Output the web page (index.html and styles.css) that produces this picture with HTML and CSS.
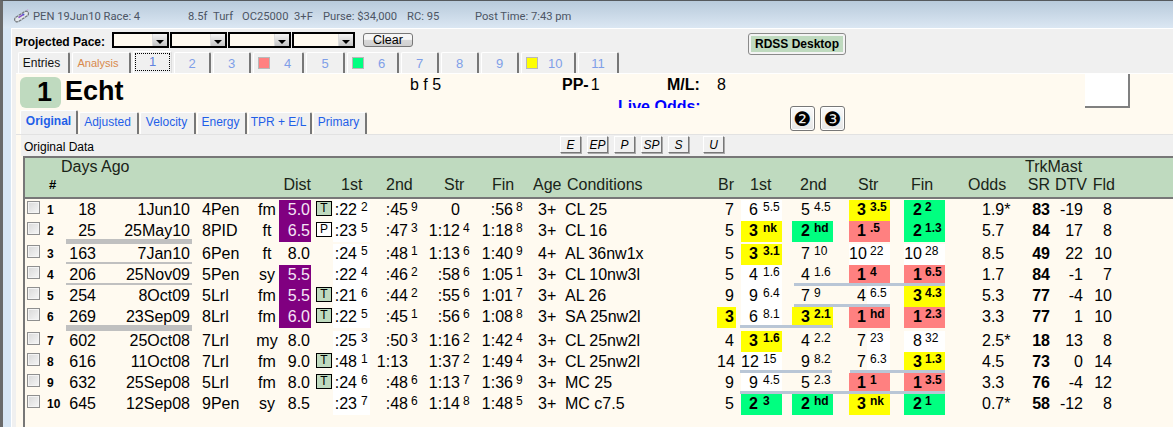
FILE: index.html
```html
<!DOCTYPE html>
<html lang="en">
<head>
<meta charset="utf-8">
<title>Echt</title>
<link rel="stylesheet" href="styles.css">
</head>
<body>
<div class="window">
  <div class="titlebar">
    <svg class="clip" width="15" height="14" viewBox="0 0 15 14"><rect x="-.5" y="5" width="15.5" height="5" rx="2.5" transform="rotate(-33 7.5 7)" fill="#e4e8ec" stroke="#70757a" stroke-width="1.2" stroke-dasharray="3 .6"/><path d="M4.5 8.7 9.5 5.4" stroke="#8a50c8" stroke-width="1.6"/><circle cx="9.5" cy="5.4" r="1" fill="#4858d0"/><circle cx="13.6" cy="1" r=".8" fill="#c8a0d8"/></svg>
    <span class="ti">PEN 19Jun10 Race: 4</span>
    <span class="ti">8.5f</span>
    <span class="ti">Turf</span>
    <span class="ti">OC25000</span>
    <span class="ti">3+F</span>
    <span class="ti">Purse: $34,000</span>
    <span class="ti">RC: 95</span>
    <span class="ti">Post Time: 7:43 pm</span>
  </div>
  <div class="client">
    <div class="pace">
      <span class="pace-label">Projected Pace:</span>
      <div class="combo combo-a"><span class="drop"></span></div>
      <div class="combo combo-a"><span class="drop"></span></div>
      <div class="combo combo-b"><span class="drop"></span></div>
      <div class="combo combo-b"><span class="drop"></span></div>
      <button class="clear">Clear</button>
      <button class="rdss"><span>RDSS Desktop</span></button>
    </div>
    <div class="tabs">
      <div class="tab tab-entries">Entries</div>
      <div class="tab tab-analysis">Analysis</div>
      <div class="tab tab-sel"><span class="focus">1</span></div>
      <div class="tab">2</div>
      <div class="tab">3</div>
      <div class="tab tab-sw"><i class="sw sw-red"></i>4</div>
      <div class="tab">5</div>
      <div class="tab tab-sw"><i class="sw sw-green"></i>6</div>
      <div class="tab">7</div>
      <div class="tab">8</div>
      <div class="tab">9</div>
      <div class="tab tab-sw tab-sw10"><i class="sw sw-yellow"></i>10</div>
      <div class="tab">11</div>
    </div>
    <div class="page">
      <div class="card">
        <div class="badge">1</div>
        <div class="name">Echt</div>
        <div class="info info-sex">b f 5</div>
        <div class="info info-pp"><b>PP-</b>1</div>
        <div class="live">Live Odds:</div>
        <div class="info info-ml"><b>M/L:</b><span class="ml-val">8</span></div>
        <div class="photo"></div>
        <div class="subtabs">
          <div class="subtab subtab-sel">Original</div>
          <div class="subtab">Adjusted</div>
          <div class="subtab">Velocity</div>
          <div class="subtab">Energy</div>
          <div class="subtab">TPR + E/L</div>
          <div class="subtab">Primary</div>
        </div>
        <div class="circles">
          <button class="circle">❷</button>
          <button class="circle">❸</button>
        </div>
      </div>
      <div class="sub">
        <div class="subhead">
          <span class="subhead-label">Original Data</span>
          <button class="pb">E</button>
          <button class="pb">EP</button>
          <button class="pb">P</button>
          <button class="pb">SP</button>
          <button class="pb">S</button>
          <button class="pb pb-u">U</button>
        </div>
        <div class="table">
          <div class="head">
            <div class="h h-days">Days Ago</div>
            <div class="h h-trk">TrkMast</div>
            <div class="h h-hash">#</div>
            <div class="h h-dist">Dist</div>
            <div class="h h-t1">1st</div>
            <div class="h h-t2">2nd</div>
            <div class="h h-t3">Str</div>
            <div class="h h-t4">Fin</div>
            <div class="h h-age">Age</div>
            <div class="h h-cond">Conditions</div>
            <div class="h h-br">Br</div>
            <div class="h h-p1">1st</div>
            <div class="h h-p2">2nd</div>
            <div class="h h-p3">Str</div>
            <div class="h h-p4">Fin</div>
            <div class="h h-odds">Odds</div>
            <div class="h h-sr">SR</div>
            <div class="h h-dtv">DTV</div>
            <div class="h h-fld">Fld</div>
          </div>
          <div class="rows">

            <div class="row">
              <input class="cb" type="checkbox"><b class="num">1</b><span class="days">18</span><span class="date">1Jun10</span><span class="race">4Pen</span><span class="surf">fm</span><span class="dist purple">5.0</span><span class="trk"><i class="tag tag-t">T</i></span>
              <span class="tm t1"><span class="m">:22</span><span class="s">2</span></span><span class="tm t2"><span class="m">:45</span><span class="s">9</span></span><span class="tm t3"><span class="m">0</span></span><span class="tm t4"><span class="m">:56</span><span class="s">8</span></span>
              <span class="age">3+</span><span class="cond">CL 25</span><span class="br">7</span>
              <span class="p p1 w"><span class="m">6</span><span class="s">5.5</span></span><span class="p p2"><span class="m">5</span><span class="s">4.5</span></span><span class="p p3 y"><span class="m">3</span><span class="s">3.5</span></span><span class="p p4 g"><span class="m">2</span><span class="s">2</span></span>
              <span class="odds">1.9*</span><b class="sr">83</b><span class="dtv">-19</span><span class="fld">8</span>
            </div>

            <div class="row sep2">
              <input class="cb" type="checkbox"><b class="num">2</b><span class="days">25</span><span class="date">25May10</span><span class="race">8PID</span><span class="surf">ft</span><span class="dist purple">6.5</span><span class="trk"><i class="tag tag-p">P</i></span>
              <span class="tm t1"><span class="m">:23</span><span class="s">5</span></span><span class="tm t2"><span class="m">:47</span><span class="s">3</span></span><span class="tm t3"><span class="m">1:12</span><span class="s">4</span></span><span class="tm t4"><span class="m">1:18</span><span class="s">8</span></span>
              <span class="age">3+</span><span class="cond">CL 16</span><span class="br">5</span>
              <span class="p p1 y"><span class="m">3</span><span class="s">nk</span></span><span class="p p2 g"><span class="m">2</span><span class="s">hd</span></span><span class="p p3 r"><span class="m">1</span><span class="s">.5</span></span><span class="p p4 g"><span class="m">2</span><span class="s">1.3</span></span>
              <span class="odds">5.7</span><b class="sr">84</b><span class="dtv">17</span><span class="fld">8</span>
              <i class="bar-g bar-thick"></i>
            </div>

            <div class="row">
              <input class="cb" type="checkbox"><b class="num">3</b><span class="days">163</span><span class="date">7Jan10</span><span class="race">6Pen</span><span class="surf">ft</span><span class="dist">8.0</span>
              <span class="tm t1"><span class="m">:24</span><span class="s">5</span></span><span class="tm t2"><span class="m">:48</span><span class="s">1</span></span><span class="tm t3"><span class="m">1:13</span><span class="s">6</span></span><span class="tm t4"><span class="m">1:40</span><span class="s">9</span></span>
              <span class="age">4+</span><span class="cond">AL 36nw1x</span><span class="br">5</span>
              <span class="p p1 y"><span class="m">3</span><span class="s">3.1</span></span><span class="p p2"><span class="m">7</span><span class="s">10</span></span><span class="p p3 w"><span class="m">10</span><span class="s">22</span></span><span class="p p4 w"><span class="m">10</span><span class="s">28</span></span>
              <span class="odds">8.5</span><b class="sr">49</b><span class="dtv">22</span><span class="fld">10</span>
              <i class="bar-g"></i>
            </div>

            <div class="row">
              <input class="cb" type="checkbox"><b class="num">4</b><span class="days">206</span><span class="date">25Nov09</span><span class="race">5Pen</span><span class="surf">sy</span><span class="dist purple">5.5</span>
              <span class="tm t1"><span class="m">:22</span><span class="s">4</span></span><span class="tm t2"><span class="m">:46</span><span class="s">2</span></span><span class="tm t3"><span class="m">:58</span><span class="s">6</span></span><span class="tm t4"><span class="m">1:05</span><span class="s">1</span></span>
              <span class="age">3+</span><span class="cond">CL 10nw3l</span><span class="br">5</span>
              <span class="p p1 w"><span class="m">4</span><span class="s">1.6</span></span><span class="p p2"><span class="m">4</span><span class="s">1.6</span></span><span class="p p3 r"><span class="m">1</span><span class="s">4</span></span><span class="p p4 r"><span class="m">1</span><span class="s">6.5</span></span>
              <span class="odds">1.7</span><b class="sr">84</b><span class="dtv">-1</span><span class="fld">7</span>
              <i class="bar-g"></i><i class="bar-b from-p2 to-p4"></i>
            </div>

            <div class="row">
              <input class="cb" type="checkbox"><b class="num">5</b><span class="days">254</span><span class="date">8Oct09</span><span class="race">5Lrl</span><span class="surf">fm</span><span class="dist purple">5.5</span><span class="trk"><i class="tag tag-t">T</i></span>
              <span class="tm t1"><span class="m">:21</span><span class="s">6</span></span><span class="tm t2"><span class="m">:44</span><span class="s">2</span></span><span class="tm t3"><span class="m">:55</span><span class="s">6</span></span><span class="tm t4"><span class="m">1:01</span><span class="s">7</span></span>
              <span class="age">3+</span><span class="cond">AL 26</span><span class="br">9</span>
              <span class="p p1 w"><span class="m">9</span><span class="s">6.4</span></span><span class="p p2"><span class="m">7</span><span class="s">9</span></span><span class="p p3 hw"><span class="m">4</span><span class="s">6.5</span></span><span class="p p4 y"><span class="m">3</span><span class="s">4.3</span></span>
              <span class="odds">5.3</span><b class="sr">77</b><span class="dtv">-4</span><span class="fld">10</span>
              <i class="bar-b from-p2 to-p3"></i>
            </div>

            <div class="row sep3">
              <input class="cb" type="checkbox"><b class="num">6</b><span class="days">269</span><span class="date">23Sep09</span><span class="race">8Lrl</span><span class="surf">fm</span><span class="dist purple">6.0</span><span class="trk"><i class="tag tag-t">T</i></span>
              <span class="tm t1"><span class="m">:22</span><span class="s">5</span></span><span class="tm t2"><span class="m">:45</span><span class="s">1</span></span><span class="tm t3"><span class="m">:56</span><span class="s">6</span></span><span class="tm t4"><span class="m">1:08</span><span class="s">8</span></span>
              <span class="age">3+</span><span class="cond">SA 25nw2l</span><span class="br y-br">3</span>
              <span class="p p1 w"><span class="m">6</span><span class="s">8.1</span></span><span class="p p2 y"><span class="m">3</span><span class="s">2.1</span></span><span class="p p3 r"><span class="m">1</span><span class="s">hd</span></span><span class="p p4 r"><span class="m">1</span><span class="s">2.3</span></span>
              <span class="odds">3.3</span><b class="sr">77</b><span class="dtv">1</span><span class="fld">10</span>
              <i class="bar-g bar-thicker"></i><i class="bar-b from-p1 to-p2"></i>
            </div>

            <div class="row">
              <input class="cb" type="checkbox"><b class="num">7</b><span class="days">602</span><span class="date">25Oct08</span><span class="race">7Lrl</span><span class="surf">my</span><span class="dist">8.0</span>
              <span class="tm t1"><span class="m">:25</span><span class="s">3</span></span><span class="tm t2"><span class="m">:50</span><span class="s">3</span></span><span class="tm t3"><span class="m">1:16</span><span class="s">2</span></span><span class="tm t4"><span class="m">1:42</span><span class="s">4</span></span>
              <span class="age">3+</span><span class="cond">CL 25nw2l</span><span class="br">4</span>
              <span class="p p1 y"><span class="m">3</span><span class="s">1.6</span></span><span class="p p2"><span class="m">4</span><span class="s">2.2</span></span><span class="p p3 hw"><span class="m">7</span><span class="s">23</span></span><span class="p p4 w"><span class="m">8</span><span class="s">32</span></span>
              <span class="odds">2.5*</span><b class="sr">18</b><span class="dtv">13</span><span class="fld">8</span>
            </div>

            <div class="row">
              <input class="cb" type="checkbox"><b class="num">8</b><span class="days">616</span><span class="date">11Oct08</span><span class="race">7Lrl</span><span class="surf">fm</span><span class="dist">9.0</span><span class="trk"><i class="tag tag-t">T</i></span>
              <span class="tm t1"><span class="m">:48</span><span class="s">1</span></span><span class="tm t2"><span class="m">1:13</span></span><span class="tm t3"><span class="m">1:37</span><span class="s">2</span></span><span class="tm t4"><span class="m">1:49</span><span class="s">4</span></span>
              <span class="age">3+</span><span class="cond">CL 25nw2l</span><span class="br">14</span>
              <span class="p p1 w"><span class="m">12</span><span class="s">15</span></span><span class="p p2"><span class="m">9</span><span class="s">8.2</span></span><span class="p p3 hw"><span class="m">7</span><span class="s">6.3</span></span><span class="p p4 y"><span class="m">3</span><span class="s">1.3</span></span>
              <span class="odds">4.5</span><b class="sr">73</b><span class="dtv">0</span><span class="fld">14</span>
              <i class="bar-b from-p1 to-p2"></i><i class="bar-b from-p3 to-p4"></i>
            </div>

            <div class="row">
              <input class="cb" type="checkbox"><b class="num">9</b><span class="days">632</span><span class="date">25Sep08</span><span class="race">5Lrl</span><span class="surf">fm</span><span class="dist">8.0</span><span class="trk"><i class="tag tag-t">T</i></span>
              <span class="tm t1"><span class="m">:24</span><span class="s">6</span></span><span class="tm t2"><span class="m">:48</span><span class="s">6</span></span><span class="tm t3"><span class="m">1:13</span><span class="s">7</span></span><span class="tm t4"><span class="m">1:36</span><span class="s">9</span></span>
              <span class="age">3+</span><span class="cond">MC 25</span><span class="br">9</span>
              <span class="p p1 w"><span class="m">9</span><span class="s">4.5</span></span><span class="p p2"><span class="m">5</span><span class="s">2.3</span></span><span class="p p3 r"><span class="m">1</span><span class="s">1</span></span><span class="p p4 r"><span class="m">1</span><span class="s">3.5</span></span>
              <span class="odds">3.3</span><b class="sr">76</b><span class="dtv">-4</span><span class="fld">12</span>
              <i class="bar-b from-p1 to-p4"></i>
            </div>

            <div class="row">
              <input class="cb" type="checkbox"><b class="num">10</b><span class="days">645</span><span class="date">12Sep08</span><span class="race">9Pen</span><span class="surf">sy</span><span class="dist">8.5</span>
              <span class="tm t1"><span class="m">:23</span><span class="s">7</span></span><span class="tm t2"><span class="m">:48</span><span class="s">6</span></span><span class="tm t3"><span class="m">1:14</span><span class="s">8</span></span><span class="tm t4"><span class="m">1:48</span><span class="s">5</span></span>
              <span class="age">3+</span><span class="cond">MC c7.5</span><span class="br">5</span>
              <span class="p p1 g"><span class="m">2</span><span class="s">3</span></span><span class="p p2 g"><span class="m">2</span><span class="s">hd</span></span><span class="p p3 y"><span class="m">3</span><span class="s">nk</span></span><span class="p p4 g"><span class="m">2</span><span class="s">1</span></span>
              <span class="odds">0.7*</span><b class="sr">58</b><span class="dtv">-12</span><span class="fld">8</span>
            </div>

          </div>
        </div>
      </div>
    </div>
  </div>
</div>
</body>
</html>
```
FILE: styles.css
```css
* { box-sizing: border-box; }
html, body { margin: 0; padding: 0; }
body { width: 1173px; height: 427px; overflow: hidden; font-family: "Liberation Sans", Arial, sans-serif; color: #000; }
button { font-family: inherit; padding: 0; margin: 0; }

.window {
  width: 1173px; height: 427px; overflow: hidden;
  display: flex; flex-direction: column;
  border-left: 3px solid #6a6a6a; border-top: 1px solid #55595d;
  background: #d8e6f4;
}

/* title bar */
.titlebar {
  flex: none; height: 27px;
  display: grid; grid-template-columns: 11px 19px 155px 25px 29px 52px 29px 84px 68px 1fr;
  align-items: center; padding-top: 3px;
  background: linear-gradient(#b8cadb, #dbe7f3);
  font: 11.2px Roboto, sans-serif; color: #4c5564;
}
.clip { grid-column: 2; margin-top: -1px; }
.ti { white-space: nowrap; }

/* client */
.client {
  flex: 1; min-height: 0; margin-left: 8px;
  border-top: 1px solid #fff; border-left: 1px solid #fff;
  background: #f0f0f0; padding-left: 4px;
  display: flex; flex-direction: column;
}
.pace { flex: none; height: 22px; display: flex; align-items: flex-start; }
.pace-label { font-weight: bold; font-size: 12px; line-height: 14px; margin: 6px 6px 0 -1px; width: 91px; white-space: nowrap; }
.combo { height: 16px; margin: 3px 1px 0 0; border: 2px solid #000; background: #fffaf0; display: flex; justify-content: flex-end; }
.combo-a { width: 57px; }
.combo-b { width: 63px; }
.drop { width: 15px; background: linear-gradient(#f4f4f4, #c4c4c4); position: relative; border-left: 1px solid #ddd; }
.drop::after { content: ""; position: absolute; left: 3px; top: 6px; border: 4px solid transparent; border-top: 4px solid #000; border-bottom: 0; }
.clear {
  width: 50px; height: 14px; margin: 4px 0 0 7px;
  border: 1px solid #777; border-radius: 3px;
  background: linear-gradient(#f6f6f6 45%, #d8d8d8 50%, #cfcfcf);
  font-size: 12.5px; line-height: 12px; color: #000;
}
.rdss {
  width: 98px; height: 22px; margin: 4px 0 0 335px; padding: 2px;
  border: 1px solid #8a8a8a; border-radius: 3px; background: #f4f4f4;
}
.rdss span { display: block; height: 16px; background: #bfdabf; font-weight: bold; font-size: 12px; line-height: 16px; color: #000; }

/* outer tabs */
.tabs {
  flex: none; height: 22px; padding-left: 2px;
  display: grid; grid-template-columns: 54px 61px 41px 39px 40px 53px 41px 54px 40px 40px 40px 57px 43px;
  justify-content: start;
  font-size: 13px; color: #7f9fe8;
}
.tab {
  margin-right: 2px; margin-top: 1px; height: 21px;
  border-top: 1px solid #fff; border-left: 1px solid #fff; border-right: 2px solid #777;
  border-radius: 2px 2px 0 0; background: #f0f0f0;
  display: flex; align-items: center; justify-content: center;
}
.tab-entries { color: #111; font-size: 12px; padding-right: 4px; }
.tab-analysis { color: #d8894c; font-size: 11px; padding-right: 6px; }
.tab-sel { margin-top: 0; height: 22px; border-right: 1px solid #ddd; color: #5f83e0; padding: 1px; align-items: stretch; }
.focus { flex: 1; display: flex; justify-content: center; padding-top: 1px; outline: 1px dotted #000; outline-offset: -1px; margin-bottom: 1px; }
.tab-sw { justify-content: flex-start; padding-left: 4px; }
.sw { width: 12px; height: 12px; border: 1px solid #b8b8b8; margin-right: 14px; flex: none; }
.tab-sw10 .sw { margin-right: 10px; }
.sw-red { background: #ff8080; }
.sw-green { background: #00ff80; }
.sw-yellow { background: #ffff00; }

/* page */
.page { flex: 1; min-height: 0; border-top: 1px solid #fff; background: #fffaf0; display: flex; flex-direction: column; }
.card {
  flex: none; height: 61px;
  display: grid;
  grid-template-columns: 4px 41px 4px 345px 152px 56px 49px 123px 295px 45px 1fr;
  grid-template-rows: 24px 8px 4px 25px;
}
.badge {
  grid-column: 2; grid-row: 1 / 4; height: 31px; margin-top: 3px;
  background: #bfdabf; border-radius: 6px;
  font-weight: bold; font-size: 27px; line-height: 31px; text-align: center; padding-left: 8px;
}
.name { grid-column: 4; grid-row: 1 / 4; font-weight: bold; font-size: 27px; line-height: 31px; margin-top: 2px; height: 31px; }
.info { grid-row: 1; font-size: 16px; line-height: 22px; white-space: nowrap; }
.info-sex { grid-column: 5; }
.info-pp { grid-column: 6 / 8; }
.info-pp b { margin-right: 2px; }
.info-ml { grid-column: 8; }
.ml-val { margin-left: 17px; }
.live {
  grid-column: 7 / 9; grid-row: 2 / 4; height: 10px; overflow: hidden;
  color: #00f; font-weight: bold; font-size: 16px; line-height: 18px; white-space: nowrap;
}
.photo { grid-column: 10; grid-row: 1 / 4; height: 34px; background: #fff; border-right: 2px solid #808080; border-bottom: 2px solid #808080; }
.subtabs { grid-column: 2 / 9; grid-row: 4; display: grid; grid-template-columns: 59px 61px 57px 51px 65px 55px; justify-content: start; align-items: end; }
.subtab {
  height: 23px; margin-right: 1px; padding-right: 2px;
  background: #f0f0f0; border-top: 1px solid #fff; border-left: 1px solid #fff; border-right: 2px solid #777;
  border-radius: 2px 2px 0 0;
  font-size: 12px; line-height: 19px; text-align: center; color: #1f5fe8; white-space: nowrap;
}
.subtab-sel { height: 25px; padding-right: 0; font-weight: bold; line-height: 20px; }
.circles { grid-column: 9; grid-row: 3 / 5; display: flex; gap: 5px; align-items: flex-start; }
.circle {
  width: 25px; height: 25px; border: 1px solid #777; border-radius: 3px;
  background: linear-gradient(#fafafa, #e6e6e6); box-shadow: inset 0 0 0 1px #fff;
  font-family: "DejaVu Sans", sans-serif; font-size: 20px; line-height: 22px; color: #000;
}

/* sub page */
.sub { flex: 1; min-height: 0; padding-left: 5px; border-top: 1px solid #e2e2e2; margin-top: -1px; display: flex; flex-direction: column; }
.subhead { flex: none; height: 21px; background: #f0f0f0; display: flex; align-items: flex-start; }
.subhead-label { width: 539px; padding-left: 3px; font-size: 12px; line-height: 24px; }
.pb {
  width: 21px; height: 17px; margin: 1px 6px 0 0;
  border: 1px solid; border-color: #fff #777 #777 #fff;
  background: #f0f0f0; box-shadow: 1px 1px 0 #aaa;
  font-size: 12px; font-style: italic; line-height: 14px; color: #000;
}
.pb-u { margin-left: 8px; }

/* table */
.table { flex: 1; min-height: 0; margin-left: 2px; border-left: 2px solid #777; }
.head, .row {
  display: grid;
  grid-template-columns:
    [chk] 22px [num] 19px [days] 30px [date] 96px [race] 63px [surf] 24px [dist] 32px [trk] 22px
    [t1] 37px [t2] 53px [t3] 52px [t4] 58px [age] 32px [cond] 152px [br] 19px [g0] 5px
    [p1] 41px [g1] 10px [p2] 41px [g2] 16px [p3] 41px [g3] 14px [p4] 41px [g4] 37px
    [odds] 36px [sr] 32px [dtv] 33px [fld] 29px [end];
}
.head {
  height: 43px; grid-template-rows: 18px 21px;
  border-top: 2px solid #777; border-bottom: 2px solid #777;
  background: #bfdabf; font-size: 16px; line-height: 18px; color: #1a2418;
  white-space: nowrap;
}
.h { grid-row: 2; }
.h-days { grid-row: 1; grid-column: num / race; padding-left: 14px; }
.h-trk { grid-row: 1; grid-column: sr / end; padding-left: 7px; }
.h-hash { grid-column: num; font-weight: bold; font-size: 13px; padding-left: 2px; color: #000; }
.h-dist { grid-column: dist; text-align: right; }
.h-t1 { grid-column: t1; padding-left: 8px; }
.h-t2 { grid-column: t2; padding-left: 16px; }
.h-t3 { grid-column: t3; padding-left: 21px; }
.h-t4 { grid-column: t4; padding-left: 17px; }
.h-age { grid-column: age; }
.h-cond { grid-column: cond; padding-left: 2px; }
.h-br { grid-column: br; text-align: right; padding-right: 2px; }
.h-p1 { grid-column: p1; padding-left: 9px; }
.h-p2 { grid-column: p2; padding-left: 8px; }
.h-p3 { grid-column: p3; padding-left: 9px; }
.h-p4 { grid-column: p4; padding-left: 7px; }
.h-odds { grid-column: g4 / sr; padding-left: 23px; }
.h-sr { grid-column: sr; text-align: right; }
.h-dtv { grid-column: dtv; text-align: right; margin-right: -4px; }
.h-fld { grid-column: fld; text-align: right; margin-right: -3px; }

.rows { padding-top: 1px; }
.row { grid-template-rows: 21px; font-size: 16px; line-height: 20px; white-space: nowrap; }
.row > * { grid-row: 1; }
.sep2 { margin-bottom: 2px; }
.sep3 { margin-bottom: 3px; }
.cb {
  grid-column: chk; appearance: none; -webkit-appearance: none;
  width: 13px; height: 13px; margin: 1px 0 0 2px;
  border: 1px solid #8f8f8f; background: linear-gradient(135deg, #d8d8d8, #f6f6f6);
  box-shadow: inset 0 0 0 1px #f4f4f4;
}
.num { grid-column: num; font-size: 12px; line-height: 20px; }
.days { grid-column: days; text-align: right; }
.date { grid-column: date; text-align: right; padding-right: 2px; }
.race { grid-column: race; padding-left: 10px; }
.surf { grid-column: surf; text-align: center; }
.dist { grid-column: dist; text-align: right; padding-right: 1px; }
.purple { background: #800080; color: #f6e6f6; }
.trk { grid-column: trk; }
.tag {
  display: block; width: 16px; height: 15px; margin: 1px 0 0 5px;
  border: 1px solid #000; font-style: normal; font-size: 12px; line-height: 13px; text-align: center;
}
.tag-t { background: #bfdabf; }
.tag-p { background: #fff; }

.tm { display: flex; align-items: flex-start; }
.m { text-align: right; flex: none; }
.s { flex: none; font-size: 12px; line-height: 15px; margin-left: 3px; }
.t1 { grid-column: t1; background: #fff; }
.t1 .m { width: 24px; }
.t1 .s { margin-left: 4px; }
.t2 { grid-column: t2; }
.t2 .m { width: 38px; }
.t3 { grid-column: t3; }
.t3 .m { width: 37px; }
.t4 { grid-column: t4; }
.t4 .m { width: 38px; }
.age { grid-column: age; padding-left: 5px; }
.cond { grid-column: cond; }
.br { grid-column: br; text-align: right; padding-right: 2px; }
.y-br { background: #ff0; font-weight: bold; }

.p { display: flex; align-items: flex-start; }
.p .m { width: 18px; }
.p .s { margin-left: 4px; }
.p1 { grid-column: p1; }
.p1 .m { width: 17px; }
.p1 .s { margin-left: 5px; }
.p2 { grid-column: p2; }
.p3 { grid-column: p3; }
.p3 .m { width: 17px; }
.p4 { grid-column: p4; }
.p4 .s { margin-left: 3px; }
.w { background: #fff; }
.hw { background: linear-gradient(90deg, transparent 18px, #fff 18px); }
.y, .g, .r { font-weight: bold; }
.y { background: #ff0; }
.g { background: #00ff80; }
.r { background: #ff8080; }

.odds { grid-column: odds; }
.sr { grid-column: sr; text-align: right; }
.dtv { grid-column: dtv; text-align: right; }
.fld { grid-column: fld; text-align: right; }

.bar-g, .bar-b { display: block; align-self: start; margin-top: 18px; }
.bar-g { grid-column: days / race; height: 2px; background: #c0c0c0; }
.bar-thick { height: 5px; }
.bar-thicker { height: 6px; }
.bar-b { height: 3px; background: #b9c6d6; }
.from-p1 { grid-column-start: p1; margin-left: -1px; }
.from-p2 { grid-column-start: p2; margin-left: 2px; }
.from-p3 { grid-column-start: p3; margin-left: 1px; }
.to-p2 { grid-column-end: g2; margin-right: 1px; }
.to-p3 { grid-column-end: g3; }
.to-p4 { grid-column-end: g4; }
```
